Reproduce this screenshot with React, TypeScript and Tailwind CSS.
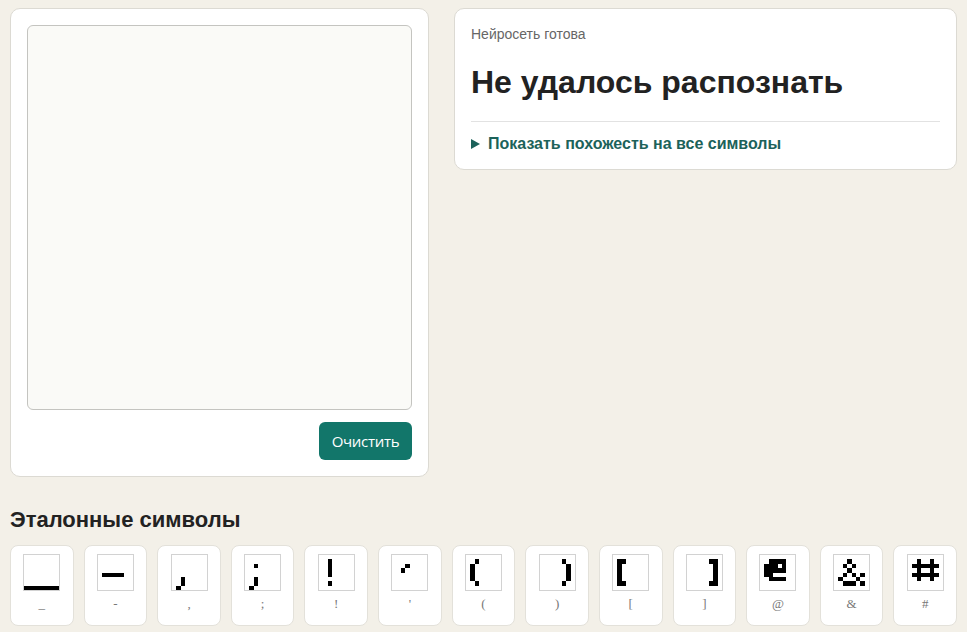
const glyphs: { label: string; rows: string[] }[] = [
  { label: '_', rows: ['........', '........', '........', '........', '........', '........', '........', 'XXXXXXXX'] },
  { label: '-', rows: ['........', '........', '........', '........', '.XXXXX..', '........', '........', '........'] },
  { label: ',', rows: ['........', '........', '........', '........', '........', '..X.....', '..X.....', '.X......'] },
  { label: ';', rows: ['........', '........', '..X.....', '........', '........', '..X.....', '..X.....', '.X......'] },
  { label: '!', rows: ['........', '..X.....', '..X.....', '..X.....', '..X.....', '........', '..X.....', '........'] },
  { label: "'", rows: ['........', '........', '...X....', '..X.....', '........', '........', '........', '........'] },
  { label: '(', rows: ['........', '..X.....', '.X......', '.X......', '.X......', '.X......', '..X.....', '........'] },
  { label: ')', rows: ['........', '.....X..', '......X.', '......X.', '......X.', '......X.', '.....X..', '........'] },
  { label: '[', rows: ['........', '.XX.....', '.X......', '.X......', '.X......', '.X......', '.XX.....', '........'] },
  { label: ']', rows: ['........', '.....XX.', '......X.', '......X.', '......X.', '......X.', '.....XX.', '........'] },
  { label: '@', rows: ['........', '..XXXX..', '.XXX.X..', '.XXXXX..', '.XX.....', '..XXXX..', '........', '........'] },
  { label: '&', rows: ['........', '...X....', '..X.X...', '...X....', '..X.X.X.', '.X...X..', '..XXX.X.', '........'] },
  { label: '#', rows: ['........', '..X..X..', '.XXXXXX.', '..X..X..', '.XXXXXX.', '..X..X..', '........', '........'] },
];

function Glyph({ rows }: { rows: string[] }) {
  return (
    <svg width="35" height="35" viewBox="0 0 8 8" shapeRendering="crispEdges">
      {rows.flatMap((row, y) =>
        row.split('').map((c, x) =>
          c === 'X' ? <rect key={`${x}-${y}`} x={x} y={y} width="1" height="1" fill="#000" /> : null
        )
      )}
    </svg>
  );
}

export default function App() {
  return (
    <div className="min-h-screen bg-[#f3f0e8] px-[10px] pt-2 pb-6 font-['Liberation_Sans',Arial,sans-serif] text-[#222]">
      <div className="flex items-start gap-[25px]">
        <div className="rounded-[10px] border border-[#dcdad3] bg-white p-4">
          <div className="h-[385px] w-[385px] rounded-md border border-[#c4c4c0] bg-[#fafaf7]" />
          <div className="mt-3 flex justify-end">
            <button className="h-[38px] w-[93px] rounded-md bg-[#12766a] font-['Open_Sans',sans-serif] text-[15px] tracking-[-0.3px] text-white">
              Очистить
            </button>
          </div>
        </div>

        <div className="flex-1 rounded-[10px] border border-[#dcdad3] bg-white px-4 pt-4 pb-[15px]">
          <p className="text-[14px] leading-[18px] text-[#666]">Нейросеть готова</p>
          <h2 className="mt-5 text-[32px] font-bold leading-[38px] text-[#222]">Не удалось распознать</h2>
          <div className="mt-5 border-t border-[#e2e2e2] pt-3">
            <p className="flex items-center text-[16px] font-bold leading-5 text-[#1c625a]">
              <svg width="9" height="10" viewBox="0 0 9 10" className="mr-2">
                <path d="M0 0 L9 5 L0 10 Z" fill="#1c625a" />
              </svg>
              Показать похожесть на все символы
            </p>
          </div>
        </div>
      </div>

      <h3 className="mt-[30px] text-[22px] font-bold leading-[26px] text-[#222]">Эталонные символы</h3>

      <div className="mt-3 grid grid-cols-13 gap-[10px]">
        {glyphs.map((g) => (
          <div
            key={g.label}
            className="flex flex-col items-center rounded-lg border border-[#e3e1da] bg-white pt-2 pb-[13px]"
          >
            <div className="border border-[#d2d2d2] bg-white">
              <Glyph rows={g.rows} />
            </div>
            <span className="mt-[5px] font-['Liberation_Serif',serif] text-[13px] leading-4 text-[#777]">{g.label}</span>
          </div>
        ))}
      </div>
    </div>
  );
}
